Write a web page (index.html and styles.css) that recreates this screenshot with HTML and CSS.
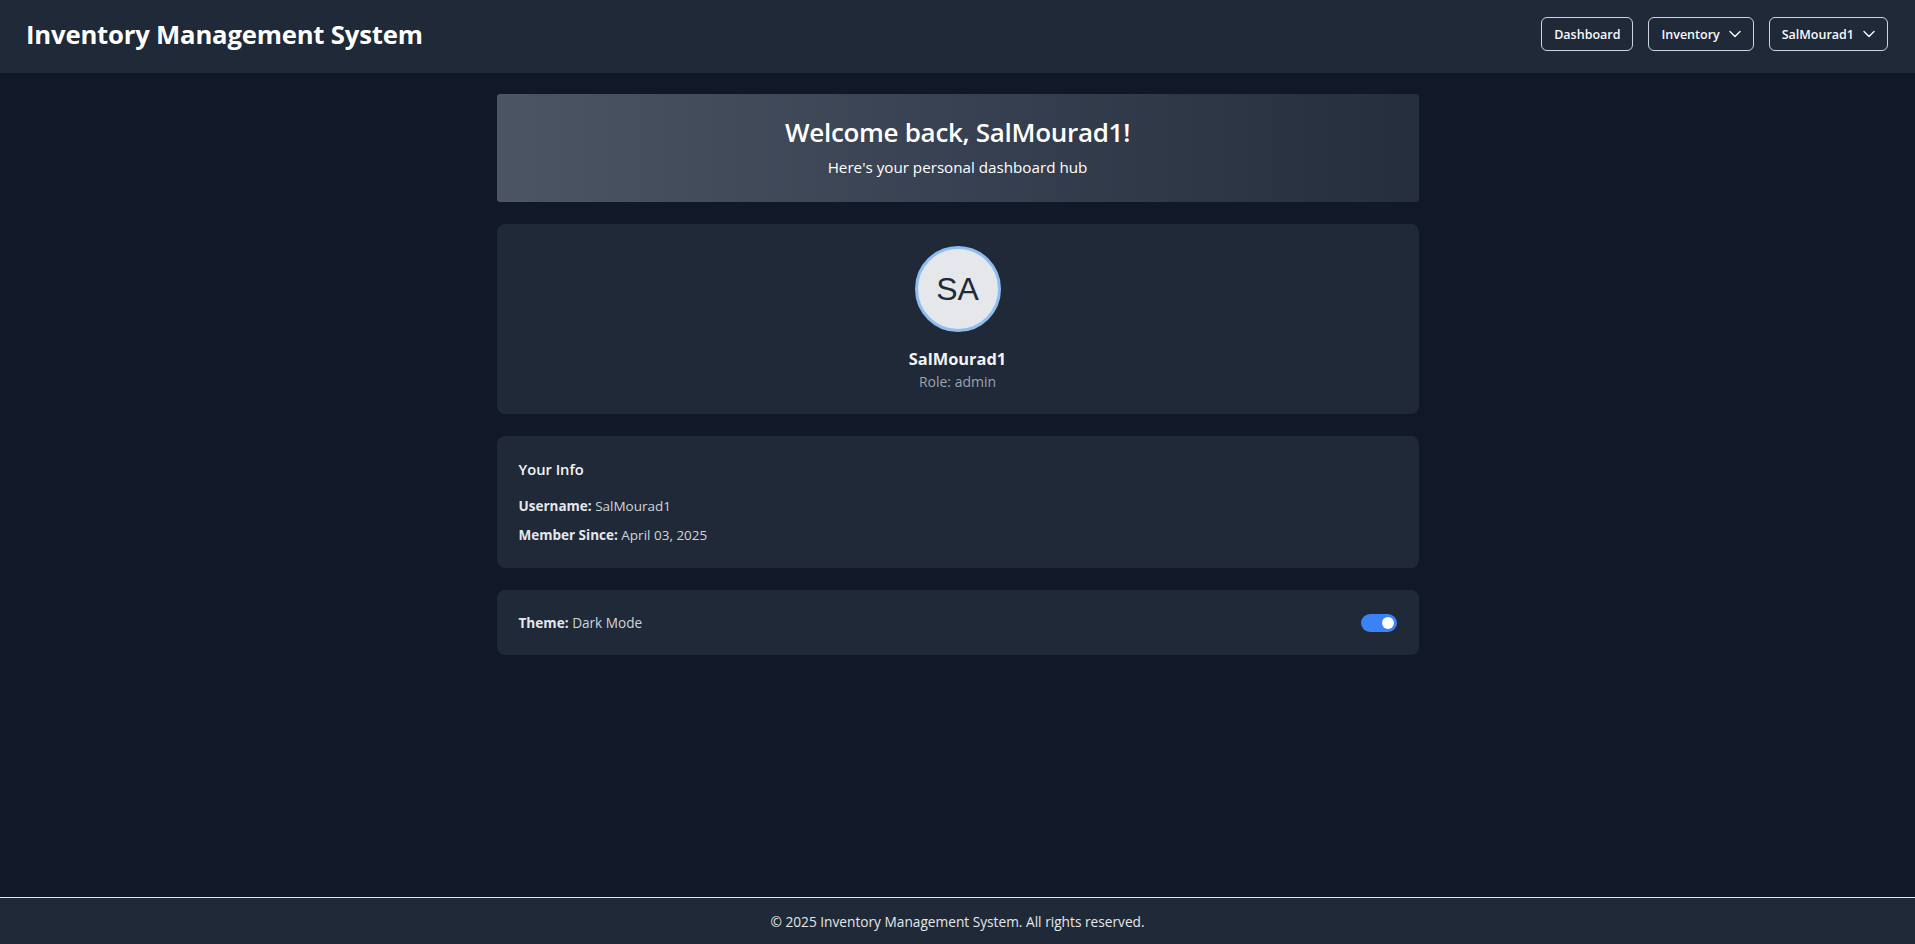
FILE: index.html
```html
<!DOCTYPE html>
<html lang="en">
<head>
<meta charset="utf-8">
<title>Inventory Management System</title>
<link rel="stylesheet" href="styles.css">
</head>
<body>
<header class="topbar">
  <h1 class="brand">Inventory Management System</h1>
  <nav class="nav">
    <button class="nav-btn">Dashboard</button>
    <button class="nav-btn">Inventory
      <svg class="chev" viewBox="0 0 12 8" width="12" height="8"><path d="M1 1.5 L6 6.5 L11 1.5" fill="none" stroke="currentColor" stroke-width="1.4" stroke-linecap="round" stroke-linejoin="round"/></svg>
    </button>
    <button class="nav-btn">SalMourad1
      <svg class="chev" viewBox="0 0 12 8" width="12" height="8"><path d="M1 1.5 L6 6.5 L11 1.5" fill="none" stroke="currentColor" stroke-width="1.4" stroke-linecap="round" stroke-linejoin="round"/></svg>
    </button>
  </nav>
</header>

<main class="main">
  <div class="container">
    <section class="welcome">
      <h2 class="welcome-title">Welcome back, SalMourad1!</h2>
      <p class="welcome-sub">Here's your personal dashboard hub</p>
    </section>

    <section class="card profile">
      <div class="avatar">SA</div>
      <div class="profile-name">SalMourad1</div>
      <div class="profile-role">Role: admin</div>
    </section>

    <section class="card info">
      <h3 class="info-title">Your Info</h3>
      <p class="info-row"><strong>Username:</strong> SalMourad1</p>
      <p class="info-row"><strong>Member Since:</strong> April 03, 2025</p>
    </section>

    <section class="card theme">
      <span class="theme-text"><strong>Theme:</strong> Dark Mode</span>
      <span class="toggle"><span class="knob"></span></span>
    </section>
  </div>
</main>

<footer class="footer">© 2025 Inventory Management System. All rights reserved.</footer>
</body>
</html>
```

FILE: styles.css
```css
* { box-sizing: border-box; }

html, body { height: 100%; }

body {
  margin: 0;
  background: #111827;
  color: #f3f4f6;
  font-family: "Open Sans", "Noto Sans", sans-serif;
  display: flex;
  flex-direction: column;
  min-height: 100vh;
}

.topbar {
  height: 73px;
  background: #1f2937;
  display: flex;
  align-items: center;
  justify-content: space-between;
  padding: 0 27px 5px 26px;
  flex-shrink: 0;
}

.brand {
  margin: 0;
  font-size: 25.7px;
  font-weight: 700;
  color: #ffffff;
  letter-spacing: -0.2px;
}

.nav {
  display: flex;
  gap: 15px;
  align-items: center;
}

.nav-btn {
  height: 34px;
  padding: 0 12px;
  border: 1px solid #cbd5e1;
  border-radius: 6px;
  background: transparent;
  color: #f9fafb;
  font-family: "Open Sans", "Noto Sans", sans-serif;
  font-size: 12.5px;
  font-weight: 600;
  display: flex;
  align-items: center;
  gap: 9px;
}

.chev { display: block; }

.main {
  flex: 1;
  padding-top: 21px;
}

.container {
  width: 922px;
  margin: 0 auto;
  display: flex;
  flex-direction: column;
  gap: 22px;
}

.welcome {
  background: linear-gradient(90deg, #4b5563 0%, #374151 50%, #252e3c 100%);
  border-radius: 3px;
  padding: 21px 0 23px;
  text-align: center;
  color: #ffffff;
}

.welcome-title {
  margin: 0;
  font-size: 26px;
  line-height: 34px;
  font-weight: 600;
  letter-spacing: -0.3px;
}

.welcome-sub {
  margin: 6px 0 0;
  font-size: 15.2px;
  line-height: 24px;
}

.card {
  background: #1f2937;
  border-radius: 8px;
}

.profile {
  padding: 22px 0 22px;
  display: flex;
  flex-direction: column;
  align-items: center;
}

.avatar {
  width: 86px;
  height: 86px;
  border-radius: 50%;
  border: 3px solid #8fbdf0;
  background: #e5e7eb;
  color: #1f2937;
  font-family: "Liberation Sans", Arial, sans-serif;
  font-size: 32px;
  display: flex;
  align-items: center;
  justify-content: center;
}

.profile-name {
  margin-top: 13px;
  font-size: 16.4px;
  line-height: 27px;
  font-weight: 700;
  color: #f3f4f6;
}

.profile-role {
  font-size: 14px;
  line-height: 20px;
  color: #9ca3af;
}

.info {
  padding: 21px 22px 23px;
}

.info-title {
  margin: 0 0 15px;
  font-size: 14.7px;
  line-height: 24px;
  font-weight: 600;
  color: #f3f4f6;
}

.info-row {
  margin: 0 0 9px;
  font-size: 13.5px;
  line-height: 20px;
  color: #d1d5db;
}

.info-row:last-child { margin-bottom: 0; }

.info-row strong, .theme-text strong {
  font-weight: 700;
  color: #e5e7eb;
}

.theme {
  height: 65px;
  padding: 0 22px;
  display: flex;
  align-items: center;
  justify-content: space-between;
}

.theme-text {
  font-size: 13.6px;
  color: #d1d5db;
}

.toggle {
  width: 36px;
  height: 18px;
  border-radius: 9px;
  background: #3b82f6;
  display: flex;
  align-items: center;
  justify-content: flex-end;
  padding-right: 3px;
}

.knob {
  width: 12px;
  height: 12px;
  border-radius: 50%;
  background: #ffffff;
}

.footer {
  flex-shrink: 0;
  height: 47px;
  border-top: 1px solid #e5e7eb;
  background: #1f2937;
  display: flex;
  align-items: center;
  justify-content: center;
  font-size: 13.7px;
  color: #e5e7eb;
}
```
